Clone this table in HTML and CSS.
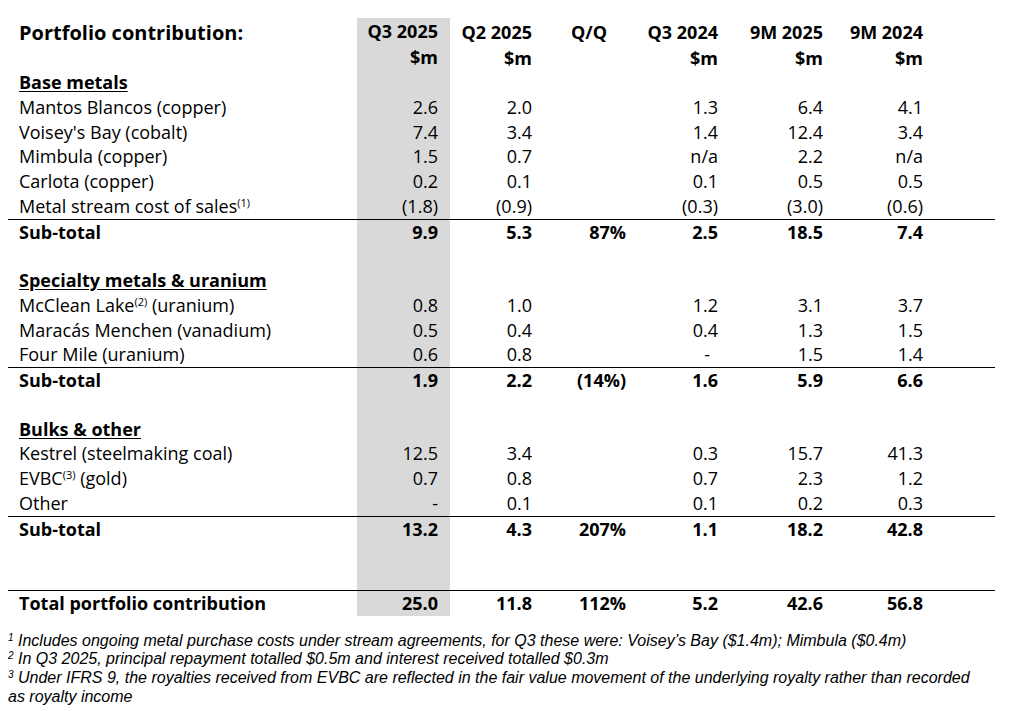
FILE: index.html
```html
<!DOCTYPE html>
<html>
<head>
<meta charset="utf-8">
<link rel="stylesheet" href="styles.css">
</head>
<body>
<div class="table">
  <div class="row head">
    <div class="label title">Portfolio contribution:</div>
    <div class="num hl">Q3 2025<br>$m</div>
    <div class="num">Q2 2025<br>$m</div>
    <div class="num qq">Q/Q</div>
    <div class="num">Q3 2024<br>$m</div>
    <div class="num">9M 2025<br>$m</div>
    <div class="num">9M 2024<br>$m</div>
    <div></div>
  </div>

  <div class="row"><div class="label section">Base metals</div><div class="num hl"></div><div></div><div></div><div></div><div></div><div></div><div></div></div>
  <div class="row"><div class="label">Mantos Blancos (copper)</div><div class="num hl">2.6</div><div class="num">2.0</div><div class="num"></div><div class="num">1.3</div><div class="num">6.4</div><div class="num">4.1</div><div></div></div>
  <div class="row"><div class="label">Voisey's Bay (cobalt)</div><div class="num hl">7.4</div><div class="num">3.4</div><div class="num"></div><div class="num">1.4</div><div class="num">12.4</div><div class="num">3.4</div><div></div></div>
  <div class="row"><div class="label">Mimbula (copper)</div><div class="num hl">1.5</div><div class="num">0.7</div><div class="num"></div><div class="num">n/a</div><div class="num">2.2</div><div class="num">n/a</div><div></div></div>
  <div class="row"><div class="label">Carlota (copper)</div><div class="num hl">0.2</div><div class="num">0.1</div><div class="num"></div><div class="num">0.1</div><div class="num">0.5</div><div class="num">0.5</div><div></div></div>
  <div class="row"><div class="label">Metal stream cost of sales<sup>(1)</sup></div><div class="num hl">(1.8)</div><div class="num">(0.9)</div><div class="num"></div><div class="num">(0.3)</div><div class="num">(3.0)</div><div class="num">(0.6)</div><div></div></div>
  <div class="row total rule"><div class="label">Sub-total</div><div class="num hl">9.9</div><div class="num">5.3</div><div class="num">87%</div><div class="num">2.5</div><div class="num">18.5</div><div class="num">7.4</div><div></div></div>
  <div class="row"><div class="label"></div><div class="num hl"></div><div></div><div></div><div></div><div></div><div></div><div></div></div>

  <div class="row"><div class="label section">Specialty metals &amp; uranium</div><div class="num hl"></div><div></div><div></div><div></div><div></div><div></div><div></div></div>
  <div class="row"><div class="label">McClean Lake<sup>(2)</sup> (uranium)</div><div class="num hl">0.8</div><div class="num">1.0</div><div class="num"></div><div class="num">1.2</div><div class="num">3.1</div><div class="num">3.7</div><div></div></div>
  <div class="row"><div class="label">Maracás Menchen (vanadium)</div><div class="num hl">0.5</div><div class="num">0.4</div><div class="num"></div><div class="num">0.4</div><div class="num">1.3</div><div class="num">1.5</div><div></div></div>
  <div class="row"><div class="label">Four Mile (uranium)</div><div class="num hl">0.6</div><div class="num">0.8</div><div class="num"></div><div class="num dash">-</div><div class="num">1.5</div><div class="num">1.4</div><div></div></div>
  <div class="row total rule"><div class="label">Sub-total</div><div class="num hl">1.9</div><div class="num">2.2</div><div class="num">(14%)</div><div class="num">1.6</div><div class="num">5.9</div><div class="num">6.6</div><div></div></div>
  <div class="row"><div class="label"></div><div class="num hl"></div><div></div><div></div><div></div><div></div><div></div><div></div></div>

  <div class="row"><div class="label section">Bulks &amp; other</div><div class="num hl"></div><div></div><div></div><div></div><div></div><div></div><div></div></div>
  <div class="row"><div class="label">Kestrel (steelmaking coal)</div><div class="num hl">12.5</div><div class="num">3.4</div><div class="num"></div><div class="num">0.3</div><div class="num">15.7</div><div class="num">41.3</div><div></div></div>
  <div class="row"><div class="label">EVBC<sup>(3)</sup> (gold)</div><div class="num hl">0.7</div><div class="num">0.8</div><div class="num"></div><div class="num">0.7</div><div class="num">2.3</div><div class="num">1.2</div><div></div></div>
  <div class="row"><div class="label">Other</div><div class="num hl">-</div><div class="num">0.1</div><div class="num"></div><div class="num">0.1</div><div class="num">0.2</div><div class="num">0.3</div><div></div></div>
  <div class="row total rule"><div class="label">Sub-total</div><div class="num hl">13.2</div><div class="num">4.3</div><div class="num">207%</div><div class="num">1.1</div><div class="num">18.2</div><div class="num">42.8</div><div></div></div>
  <div class="row"><div class="label"></div><div class="num hl"></div><div></div><div></div><div></div><div></div><div></div><div></div></div>
  <div class="row"><div class="label"></div><div class="num hl"></div><div></div><div></div><div></div><div></div><div></div><div></div></div>

  <div class="row total rule"><div class="label">Total portfolio contribution</div><div class="num hl">25.0</div><div class="num">11.8</div><div class="num">112%</div><div class="num">5.2</div><div class="num">42.6</div><div class="num">56.8</div><div></div></div>
</div>

<div class="notes">
  <p><sup>1</sup> Includes ongoing metal purchase costs under stream agreements, for Q3 these were: Voisey’s Bay ($1.4m); Mimbula ($0.4m)</p>
  <p><sup>2</sup> In Q3 2025, principal repayment totalled $0.5m and interest received totalled $0.3m</p>
  <p><sup>3</sup> Under IFRS 9, the royalties received from EVBC are reflected in the fair value movement of the underlying royalty rather than recorded as royalty income</p>
</div>
</body>
</html>
```

FILE: styles.css
```css
html, body {
  margin: 0;
  padding: 0;
  background: #ffffff;
}
body {
  padding: 18px 0 0 8px;
  color: #000;
  font-family: "Open Sans", "Liberation Sans", sans-serif;
  font-size: 18px;
}
.table {
  width: 987px;
}
.row {
  display: grid;
  grid-template-columns: 349px 93px 94px 94px 92px 105px 100px 60px;
  height: 24.75px;
  line-height: 24.75px;
  box-sizing: border-box;
}
.row.head {
  height: 52px;
  line-height: 25.5px;
  padding-top: 1px;
  font-weight: 700;
}
.row.head > div {
  padding-top: 1px;
}
.row.head .hl {
  margin-top: -1px;
}
.row.rule {
  border-top: 1px solid #000;
}
.row.total {
  font-weight: 700;
}
.label {
  padding-left: 11px;
  white-space: nowrap;
}
.title {
  font-size: 20px;
}
.section {
  font-weight: 700;
  text-decoration: underline;
  text-underline-offset: 2px;
}
.num {
  text-align: right;
  padding-right: 12px;
  white-space: nowrap;
}
.num.qq {
  padding-right: 31px;
}
.num.dash {
  padding-right: 20px;
}
.hl {
  background: #d9d9d9;
}
sup {
  font-size: 11px;
  line-height: 0;
  vertical-align: 6px;
}
.notes {
  margin-top: 17px;
  font-family: "Liberation Sans", Arial, sans-serif;
  font-style: italic;
  font-size: 16px;
  line-height: 18.7px;
  width: 978px;
}
.notes p {
  margin: 0;
}
.notes sup {
  font-size: 10px;
  vertical-align: 5px;
}
```
